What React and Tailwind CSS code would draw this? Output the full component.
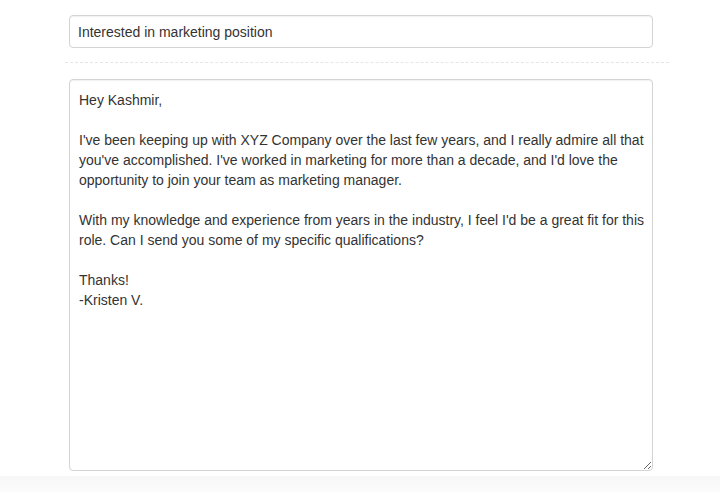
import React from "react";

const body = `Hey Kashmir,

I've been keeping up with XYZ Company over the last few years, and I really admire all that
you've accomplished. I've worked in marketing for more than a decade, and I'd love the
opportunity to join your team as marketing manager.

With my knowledge and experience from years in the industry, I feel I'd be a great fit for this
role. Can I send you some of my specific qualifications?

Thanks!
-Kristen V.`;

export default function App() {
  return (
    <div
      className="w-[720px] h-[492px] bg-white flex flex-col overflow-hidden"
      style={{ fontFamily: '"Liberation Sans", Arial, sans-serif' }}
    >
      <div className="flex-1 flex flex-col pt-[15px]">
        <div className="pl-[69px] pr-[67px]">
          <input
            type="text"
            defaultValue="Interested in marketing position"
            className="w-full h-[33px] border border-[#d4d4d4] rounded-[4px] px-[8px] text-[14px] text-[#333] bg-white shadow-[inset_0_1px_1px_rgba(0,0,0,0.06)] outline-none"
          />
        </div>
        <div className="mt-[14px] ml-[65px] mr-[51px] border-t border-dashed border-[#e6e6e6]" />
        <div className="pl-[69px] pr-[67px] mt-[16px]">
          <textarea
            defaultValue={body}
            wrap="off"
            className="block w-full h-[392px] border border-[#d4d4d4] rounded-[4px] px-[9px] py-[10px] text-[14px] leading-[20px] text-[#333] bg-white shadow-[inset_0_1px_1px_rgba(0,0,0,0.06)] outline-none overflow-hidden"
          />
        </div>
      </div>
      <div className="h-[16px] bg-gradient-to-b from-[#f7f7f7] to-[#fbfbfb]" />
    </div>
  );
}
